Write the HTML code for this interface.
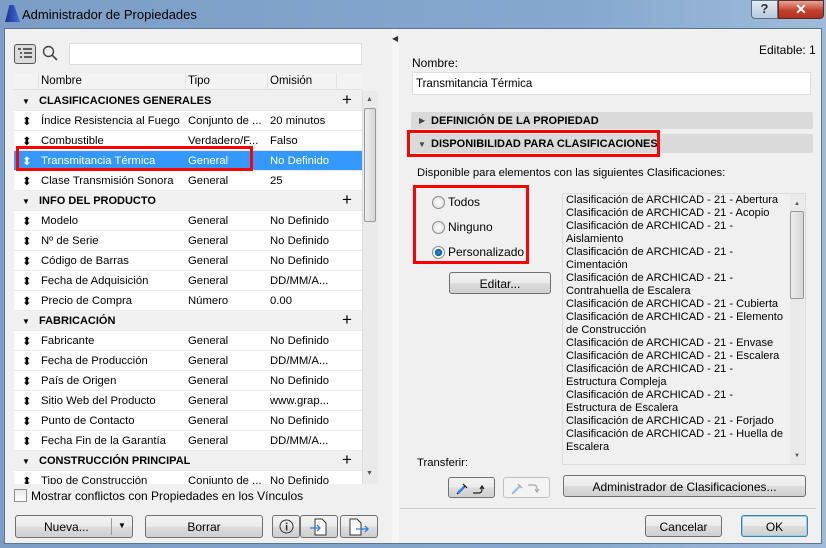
<!DOCTYPE html><html><head><meta charset="utf-8"><style>
*{box-sizing:border-box}
body{margin:0;width:826px;height:548px;overflow:hidden;font-family:"Liberation Sans",sans-serif;font-size:12px;color:#000;background:#6e8cae}
.a{position:absolute}
#win{position:absolute;left:0;top:0;width:826px;height:548px;background:linear-gradient(90deg,#7c9ec6,#86a8cf 70%,#9fbbd9);}
#body{position:absolute;left:4px;top:28px;width:818px;height:516px;background:#f0f0f0;border:1px solid #5d7691}
.btn{position:absolute;border:1px solid #707070;border-radius:3px;background:linear-gradient(#f2f2f2 0,#ebebeb 50%,#dddddd 51%,#cfcfcf 100%);text-align:center;font-size:12px}
.row{position:absolute;left:14px;width:348px;height:20px;background:#fff;border-bottom:1px solid #ebebeb;font-size:11.3px}
.row span{position:absolute;top:4px;white-space:nowrap}
.grp{background:#f0f0f0;font-weight:bold;font-size:11px}
.sel{background:#3399ff;color:#fff}
.red{position:absolute;border:3px solid #ff0000}
.rad{position:absolute;width:13px;height:13px;border-radius:50%;border:1px solid #8a8a8a;background:radial-gradient(#fff,#d8d8d8)}
.li{position:absolute;left:566px;font-size:11.1px;white-space:nowrap}
</style></head><body>
<div id="win">
<div class="a" style="left:5px;top:5px;width:15px;height:17px;background:linear-gradient(90deg,#1f2f8a,#3c6fe0);clip-path:polygon(0 100%,30% 0,60% 0,100% 100%)"></div>
<div class="a" style="left:22px;top:7px;font-size:13px">Administrador de Propiedades</div>
<div class="a" style="left:751px;top:0;width:27px;height:19px;border:1px solid #5a6f88;border-radius:0 0 0 4px;background:linear-gradient(#e3ebf4,#b8c9dc);text-align:center;font-weight:bold;color:#333;font-size:13px">?</div>
<div class="a" style="left:778px;top:0;width:46px;height:19px;border:1px solid #5a2a22;border-radius:0 0 4px 0;background:linear-gradient(#e8a598,#c4412c 55%,#b03020);text-align:center;font-weight:bold;color:#fff;font-size:14px">✕</div>
</div>
<div id="body"></div>
<!-- left -->
<div class="a" style="left:14px;top:44px;width:22px;height:20px;border:1px solid #555;border-radius:3px;background:#dcdcdc"></div>
<svg class="a" style="left:17px;top:47px" width="16" height="14"><g stroke="#333" stroke-width="1.5"><line x1="1" y1="2" x2="4" y2="2"/><line x1="6" y1="2" x2="15" y2="2"/><line x1="3" y1="6" x2="5" y2="6"/><line x1="7" y1="6" x2="15" y2="6"/><line x1="3" y1="10" x2="5" y2="10"/><line x1="7" y1="10" x2="15" y2="10"/></g></svg>
<svg class="a" style="left:42px;top:45px" width="16" height="16"><circle cx="6.5" cy="6.5" r="5" fill="none" stroke="#444" stroke-width="1.4"/><line x1="10" y1="10" x2="15" y2="15" stroke="#444" stroke-width="1.6"/></svg>
<div class="a" style="left:69px;top:43px;width:293px;height:22px;background:#fff;border:1px solid #ddd"></div>
<div class="a" style="left:14px;top:73px;width:348px;height:17px;background:#f3f3f3;border-bottom:1px solid #e0e0e0"></div>
<div class="a" style="left:38px;top:73px;width:1px;height:17px;background:#e3e3e3"></div>
<div class="a" style="left:185px;top:73px;width:1px;height:17px;background:#e3e3e3"></div>
<div class="a" style="left:267px;top:73px;width:1px;height:17px;background:#e3e3e3"></div>
<div class="a" style="left:336px;top:73px;width:1px;height:17px;background:#e3e3e3"></div>
<div class="a" style="left:41px;top:75px;font-size:11.5px">Nombre</div><div class="a" style="left:188px;top:75px;font-size:11.5px">Tipo</div><div class="a" style="left:270px;top:75px;font-size:11.5px">Omisión</div>
<div class="a" style="left:14px;top:91px;width:348px;height:393px;overflow:hidden">
<div style="position:relative;left:-14px;top:-91px">
<div class="row grp" style="top:91px"><span style="left:8px;font-size:8px;top:6px">▼</span><span style="left:25px;top:4px">CLASIFICACIONES GENERALES</span><span style="left:328px;font-weight:normal;font-size:17px;top:-1px">+</span></div>
<div class="row" style="top:111px"><span style="left:8px">⬍</span><span style="left:27px">Índice Resistencia al Fuego</span><span style="left:174px">Conjunto de ...</span><span style="left:256px">20 minutos</span></div>
<div class="row" style="top:131px"><span style="left:8px">⬍</span><span style="left:27px">Combustible</span><span style="left:174px">Verdadero/F...</span><span style="left:256px">Falso</span></div>
<div class="row sel" style="top:151px"><span style="left:8px">⬍</span><span style="left:27px">Transmitancia Térmica</span><span style="left:174px">General</span><span style="left:256px">No Definido</span></div>
<div class="row" style="top:171px"><span style="left:8px">⬍</span><span style="left:27px">Clase Transmisión Sonora</span><span style="left:174px">General</span><span style="left:256px">25</span></div>
<div class="row grp" style="top:191px"><span style="left:8px;font-size:8px;top:6px">▼</span><span style="left:25px">INFO DEL PRODUCTO</span><span style="left:328px;font-weight:normal;font-size:17px;top:-1px">+</span></div>
<div class="row" style="top:211px"><span style="left:8px">⬍</span><span style="left:27px">Modelo</span><span style="left:174px">General</span><span style="left:256px">No Definido</span></div>
<div class="row" style="top:231px"><span style="left:8px">⬍</span><span style="left:27px">Nº de Serie</span><span style="left:174px">General</span><span style="left:256px">No Definido</span></div>
<div class="row" style="top:251px"><span style="left:8px">⬍</span><span style="left:27px">Código de Barras</span><span style="left:174px">General</span><span style="left:256px">No Definido</span></div>
<div class="row" style="top:271px"><span style="left:8px">⬍</span><span style="left:27px">Fecha de Adquisición</span><span style="left:174px">General</span><span style="left:256px">DD/MM/A...</span></div>
<div class="row" style="top:291px"><span style="left:8px">⬍</span><span style="left:27px">Precio de Compra</span><span style="left:174px">Número</span><span style="left:256px">0.00</span></div>
<div class="row grp" style="top:311px"><span style="left:8px;font-size:8px;top:6px">▼</span><span style="left:25px">FABRICACIÓN</span><span style="left:328px;font-weight:normal;font-size:17px;top:-1px">+</span></div>
<div class="row" style="top:331px"><span style="left:8px">⬍</span><span style="left:27px">Fabricante</span><span style="left:174px">General</span><span style="left:256px">No Definido</span></div>
<div class="row" style="top:351px"><span style="left:8px">⬍</span><span style="left:27px">Fecha de Producción</span><span style="left:174px">General</span><span style="left:256px">DD/MM/A...</span></div>
<div class="row" style="top:371px"><span style="left:8px">⬍</span><span style="left:27px">País de Origen</span><span style="left:174px">General</span><span style="left:256px">No Definido</span></div>
<div class="row" style="top:391px"><span style="left:8px">⬍</span><span style="left:27px">Sitio Web del Producto</span><span style="left:174px">General</span><span style="left:256px">www.grap...</span></div>
<div class="row" style="top:411px"><span style="left:8px">⬍</span><span style="left:27px">Punto de Contacto</span><span style="left:174px">General</span><span style="left:256px">No Definido</span></div>
<div class="row" style="top:431px"><span style="left:8px">⬍</span><span style="left:27px">Fecha Fin de la Garantía</span><span style="left:174px">General</span><span style="left:256px">DD/MM/A...</span></div>
<div class="row grp" style="top:451px"><span style="left:8px;font-size:8px;top:6px">▼</span><span style="left:25px">CONSTRUCCIÓN PRINCIPAL</span><span style="left:328px;font-weight:normal;font-size:17px;top:-1px">+</span></div>
<div class="row" style="top:471px"><span style="left:8px">⬍</span><span style="left:27px">Tipo de Construcción</span><span style="left:174px">Conjunto de ...</span><span style="left:256px">No Definido</span></div>
</div></div>
<div class="a" style="left:362px;top:91px;width:16px;height:393px;background:#eaeaea;border-left:1px solid #ddd"></div>
<div class="a" style="left:366px;top:96px;font-size:7px;color:#555">▲</div>
<div class="a" style="left:366px;top:470px;font-size:7px;color:#555">▼</div>
<div class="a" style="left:364px;top:108px;width:12px;height:114px;border:1px solid #999;border-radius:2px;background:linear-gradient(90deg,#eee,#d6d6d6)"></div>
<div class="red" style="left:16px;top:146px;width:237px;height:25px"></div>
<div class="a" style="left:14px;top:489px;width:13px;height:13px;border:1px solid #8e8e8e;background:linear-gradient(#e8e8e8,#fff)"></div>
<div class="a" style="left:31px;top:489px">Mostrar conflictos con Propiedades en los Vínculos</div>
<div class="btn" style="left:15px;top:515px;width:118px;height:23px"><span class="a" style="left:28px;top:4px">Nueva...</span><span class="a" style="left:95px;top:2px;width:1px;height:17px;background:#999"></span><span class="a" style="left:102px;top:5px;font-size:8px">▼</span></div>
<div class="btn" style="left:145px;top:515px;width:118px;height:23px;padding-top:4px">Borrar</div>
<div class="btn" style="left:272px;top:515px;width:28px;height:23px"><svg style="margin-top:3px" width="15" height="15"><circle cx="7.5" cy="7.5" r="6.5" fill="none" stroke="#333"/><rect x="6.8" y="6" width="1.6" height="5.5" fill="#333"/><rect x="6.8" y="3.5" width="1.6" height="1.6" fill="#333"/></svg></div>
<div class="btn" style="left:300px;top:515px;width:38px;height:23px"><svg style="margin-top:2px" width="20" height="18"><path d="M6 1h7l4 4v12H6z" fill="#fff" stroke="#333"/><path d="M1 10h10M8 7l3 3-3 3" fill="none" stroke="#2a7de1" stroke-width="1.3"/></svg></div>
<div class="btn" style="left:340px;top:515px;width:38px;height:23px"><svg style="margin-top:2px" width="22" height="18"><path d="M2 1h7l4 4v12H2z" fill="#fff" stroke="#333"/><path d="M8 11h12M17 8l3 3-3 3" fill="none" stroke="#2a7de1" stroke-width="1.3"/></svg></div>
<!-- divider -->
<div class="a" style="left:392px;top:29px;width:7px;height:514px;background:#f6f6f6"></div>
<div class="a" style="left:392px;top:34px;font-size:8px;color:#333">◀</div>
<!-- right -->
<div class="a" style="left:759px;top:43px">Editable: 1</div>
<div class="a" style="left:412px;top:56px">Nombre:</div>
<div class="a" style="left:412px;top:72px;width:399px;height:23px;background:#fff;border:1px solid #ddd;padding:5px 3px;font-size:11.5px">Transmitancia Térmica</div>
<div class="a" style="left:411px;top:112px;width:402px;height:17px;background:#dadada;border-radius:2px"></div>
<div class="a" style="left:419px;top:116px;font-size:8px;color:#444">▶</div>
<div class="a" style="left:431px;top:115px;font-weight:bold;font-size:11px">DEFINICIÓN DE LA PROPIEDAD</div>
<div class="a" style="left:411px;top:134px;width:402px;height:19px;background:#dadada;border-radius:2px"></div>
<div class="a" style="left:418px;top:140px;font-size:8px;color:#444">▼</div>
<div class="a" style="left:431px;top:138px;font-weight:bold;font-size:11px">DISPONIBILIDAD PARA CLASIFICACIONES</div>
<div class="red" style="left:407px;top:130px;width:253px;height:27px"></div>
<div class="a" style="left:417px;top:167px;font-size:11.3px">Disponible para elementos con las siguientes Clasificaciones:</div>
<div class="rad" style="left:432px;top:196px"></div><div class="a" style="left:448px;top:195px">Todos</div>
<div class="rad" style="left:432px;top:221px"></div><div class="a" style="left:448px;top:220px">Ninguno</div>
<div class="rad" style="left:432px;top:246px;background:radial-gradient(#2a8fd9 0,#0a5fa8 45%,#fff 50%,#d8d8d8)"></div><div class="a" style="left:448px;top:245px">Personalizado</div>
<div class="red" style="left:413px;top:185px;width:116px;height:79px"></div>
<div class="btn" style="left:449px;top:272px;width:102px;height:22px;padding-top:4px">Editar...</div>
<div class="a" style="left:562px;top:193px;width:244px;height:272px;border:1px solid #dcdcdc;background:#f0f0f0"></div>
<div class="a" style="left:790px;top:194px;width:15px;height:270px;background:#eaeaea"></div>
<div class="a" style="left:794px;top:201px;font-size:6px;color:#555">▲</div>
<div class="a" style="left:794px;top:453px;font-size:6px;color:#555">▼</div>
<div class="a" style="left:790px;top:211px;width:14px;height:88px;border:1px solid #999;border-radius:2px;background:linear-gradient(90deg,#eee,#d6d6d6)"></div>
<div class="li" style="top:194px">Clasificación de ARCHICAD - 21 - Abertura</div>
<div class="li" style="top:207px">Clasificación de ARCHICAD - 21 - Acopio</div>
<div class="li" style="top:220px">Clasificación de ARCHICAD - 21 -</div>
<div class="li" style="top:233px">Aislamiento</div>
<div class="li" style="top:246px">Clasificación de ARCHICAD - 21 -</div>
<div class="li" style="top:259px">Cimentación</div>
<div class="li" style="top:272px">Clasificación de ARCHICAD - 21 -</div>
<div class="li" style="top:285px">Contrahuella de Escalera</div>
<div class="li" style="top:298px">Clasificación de ARCHICAD - 21 - Cubierta</div>
<div class="li" style="top:311px">Clasificación de ARCHICAD - 21 - Elemento</div>
<div class="li" style="top:324px">de Construcción</div>
<div class="li" style="top:337px">Clasificación de ARCHICAD - 21 - Envase</div>
<div class="li" style="top:350px">Clasificación de ARCHICAD - 21 - Escalera</div>
<div class="li" style="top:363px">Clasificación de ARCHICAD - 21 -</div>
<div class="li" style="top:376px">Estructura Compleja</div>
<div class="li" style="top:389px">Clasificación de ARCHICAD - 21 -</div>
<div class="li" style="top:402px">Estructura de Escalera</div>
<div class="li" style="top:415px">Clasificación de ARCHICAD - 21 - Forjado</div>
<div class="li" style="top:428px">Clasificación de ARCHICAD - 21 - Huella de</div>
<div class="li" style="top:441px">Escalera</div>
<div class="a" style="left:417px;top:457px;font-size:11.3px">Transferir:</div>
<div class="btn" style="left:448px;top:477px;width:47px;height:21px"><svg style="margin-top:2px" width="34" height="16"><path d="M2 14l8-8M8 4l4 4" stroke="#222" stroke-width="1.3" fill="none"/><path d="M3 13l6-6" stroke="#2a7de1" stroke-width="2.5"/><path d="M18 13h6q3 0 3-4v-2M25 9l2-3 2 3" fill="none" stroke="#222" stroke-width="1.2"/></svg></div>
<div class="btn" style="left:503px;top:477px;width:47px;height:21px;border-color:#c0c0c0;background:#f3f3f3"><svg style="margin-top:2px" width="34" height="16"><path d="M2 14l8-8M8 4l4 4" stroke="#aaa" stroke-width="1.3" fill="none"/><path d="M3 13l6-6" stroke="#9cc3f0" stroke-width="2.5"/><path d="M18 5h6q3 0 3 4v2M25 9l2 3 2-3" fill="none" stroke="#aaa" stroke-width="1.2"/></svg></div>
<div class="btn" style="left:563px;top:475px;width:243px;height:22px;padding-top:4px">Administrador de Clasificaciones...</div>
<div class="a" style="left:400px;top:508px;width:416px;height:1px;background:#c8c8c8"></div>
<div class="btn" style="left:645px;top:515px;width:77px;height:22px;padding-top:4px">Cancelar</div>
<div class="btn" style="left:741px;top:515px;width:67px;height:22px;padding-top:4px;border-color:#3c7fb1;box-shadow:inset 0 0 0 1px #8fd0f5">OK</div>
</body></html>
